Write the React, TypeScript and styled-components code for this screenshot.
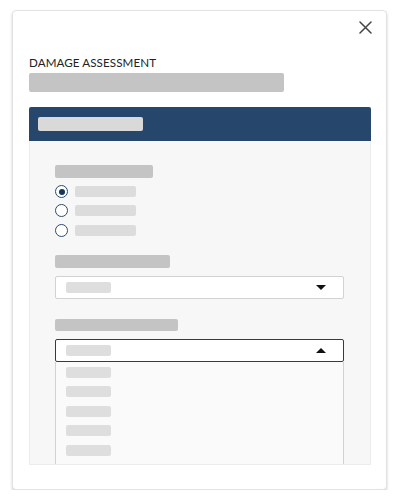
import * as React from 'react';
import styled, { createGlobalStyle } from 'styled-components';

const GlobalStyle = createGlobalStyle`
	html, body {
		margin: 0;
		padding: 0;
		background: #ffffff;
		font-family: 'Lato', 'Noto Sans', sans-serif;
	}
`;

const Modal = styled.div`
	box-sizing: border-box;
	margin: 10px 0 0 12px;
	width: 375px;
	height: 480px;
	background: #ffffff;
	border: 1px solid #e2e2e2;
	border-radius: 4px;
	box-shadow: 0 2px 3px rgba(0, 0, 0, 0.18);
	padding: 0 15px 24px 16px;
	display: flex;
	flex-direction: column;
`;

const TopBar = styled.div`
	height: 37px;
	padding-top: 4px;
	box-sizing: border-box;
	display: flex;
	justify-content: flex-end;
	align-items: flex-start;
`;

const CloseButton = styled.button`
	width: 24px;
	height: 24px;
	margin-right: -6px;
	border: none;
	background: none;
	padding: 0;
	display: flex;
	align-items: center;
	justify-content: center;
	cursor: pointer;
	color: #444;
`;

const Title = styled.div`
	margin-top: 8px;
	font-size: 11.6px;
	line-height: 14px;
	letter-spacing: 0.1px;
	color: #222;
	text-transform: uppercase;
`;

const Skeleton = styled.div<{ $w: number; $h: number; $tone?: string }>`
	width: ${(p) => p.$w}px;
	height: ${(p) => p.$h}px;
	background: ${(p) => p.$tone || '#c4c4c4'};
	border-radius: 2px;
	flex-shrink: 0;
`;

const SubTitle = styled(Skeleton)`
	margin-top: 3px;
`;

const PanelHeader = styled.div`
	margin-top: 15px;
	height: 34px;
	background: #27466b;
	border-radius: 2px 2px 0 0;
	display: flex;
	align-items: center;
	padding-left: 9px;
`;

const PanelBody = styled.div`
	position: relative;
	flex: 1;
	background: #f7f7f7;
	border: 1px solid #ececec;
	border-top: none;
	overflow: hidden;
	padding: 24px 26px 0 25px;
	display: flex;
	flex-direction: column;
`;

const Field = styled.div<{ $top: number }>`
	margin-top: ${(p) => p.$top}px;
	display: flex;
	flex-direction: column;
`;

const RadioList = styled.div`
	margin-top: 4px;
	display: flex;
	flex-direction: column;
`;

const RadioRow = styled.div`
	height: 19.3px;
	display: flex;
	align-items: center;
	gap: 7px;
`;

const RadioCircle = styled.span<{ $checked?: boolean }>`
	box-sizing: border-box;
	width: 13px;
	height: 13px;
	border-radius: 50%;
	border: 1.3px solid #2b4a6f;
	background: #fff;
	display: flex;
	align-items: center;
	justify-content: center;
	&::after {
		content: '';
		display: ${(p) => (p.$checked ? 'block' : 'none')};
		width: 6px;
		height: 6px;
		border-radius: 50%;
		background: #17355a;
	}
`;

const SelectWrap = styled.div`
	position: relative;
	margin-top: 8px;
`;

const SelectBox = styled.div<{ $open?: boolean }>`
	box-sizing: border-box;
	height: 23px;
	background: #ffffff;
	border: 1px solid ${(p) => (p.$open ? '#3a3a3a' : '#d2d2d2')};
	border-radius: 2px;
	display: flex;
	align-items: center;
	justify-content: space-between;
	padding: 0 17px 0 10px;
`;

const Caret = styled.span<{ $up?: boolean }>`
	width: 0;
	height: 0;
	border-left: 5.5px solid transparent;
	border-right: 5.5px solid transparent;
	${(p) => (p.$up ? 'border-bottom: 5px solid #111;' : 'border-top: 5px solid #111;')}
`;

const Menu = styled.div`
	position: absolute;
	top: 23px;
	left: 0;
	right: 0;
	height: 140px;
	box-sizing: border-box;
	background: #fafafa;
	border: 1px solid #d2d2d2;
	border-top: none;
	padding: 1px 0 0 10px;
`;

const MenuItem = styled.div`
	height: 19.4px;
	display: flex;
	align-items: center;
`;

const XIcon = () => (
	<svg width="13" height="13" viewBox="0 0 13 13">
		<path d="M1 1 L12 12 M12 1 L1 12" stroke="currentColor" strokeWidth="1.5" strokeLinecap="round" />
	</svg>
);

const App = () => {
	const radios = [true, false, false];
	const items = [0, 1, 2, 3, 4, 5];

	return (
		<React.Fragment>
			<GlobalStyle />
			<Modal>
				<TopBar>
					<CloseButton aria-label="close">
						<XIcon />
					</CloseButton>
				</TopBar>
				<Title>Damage Assessment</Title>
				<SubTitle $w={255} $h={19} />

				<PanelHeader>
					<Skeleton $w={105} $h={14} $tone="#d9d9d9" />
				</PanelHeader>
				<PanelBody>
					{/* radio group */}
					<Field $top={0}>
						<Skeleton $w={98} $h={13} />
						<RadioList>
							{radios.map((checked, i) => (
								<RadioRow key={i}>
									<RadioCircle $checked={checked} />
									<Skeleton $w={61} $h={11} $tone="#dcdcdc" />
								</RadioRow>
							))}
						</RadioList>
					</Field>

					{/* closed select */}
					<Field $top={15}>
						<Skeleton $w={115} $h={13} />
						<SelectWrap>
							<SelectBox>
								<Skeleton $w={45} $h={11} $tone="#dedede" />
								<Caret />
							</SelectBox>
						</SelectWrap>
					</Field>

					{/* open select */}
					<Field $top={20}>
						<Skeleton $w={123} $h={12} />
						<SelectWrap>
							<SelectBox $open>
								<Skeleton $w={45} $h={11} $tone="#dedede" />
								<Caret $up />
							</SelectBox>
							<Menu>
								{items.map((i) => (
									<MenuItem key={i}>
										<Skeleton $w={45} $h={11} $tone="#dedede" />
									</MenuItem>
								))}
							</Menu>
						</SelectWrap>
					</Field>
				</PanelBody>
			</Modal>
		</React.Fragment>
	);
};

export default App;
